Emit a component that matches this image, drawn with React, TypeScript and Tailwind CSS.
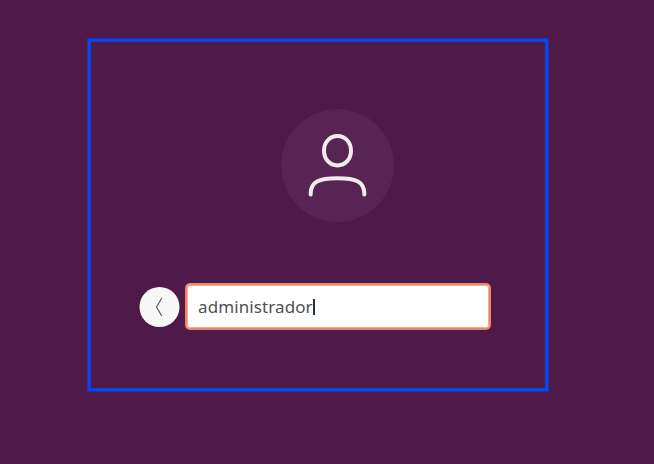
export default function App() {
  return (
    <div className="h-[464px] w-[654px] overflow-hidden bg-[#4f194a] pl-[87px] pt-[38px]">
      <div className="h-[354px] w-[462px] border border-[#2a2fa0]">
        <main className="flex h-full w-full flex-col border-2 border-[#0048ff] pl-[49px] pt-[68px] shadow-[inset_0_0_0_1px_#1d3cc4]">
          <div className="ml-[142px] flex size-[113px] items-center justify-center rounded-full bg-[#582453]">
            <svg
              width="113"
              height="113"
              viewBox="0 0 113 113"
              fill="none"
              stroke="#efedeb"
              strokeWidth="4"
              strokeLinecap="round"
              aria-hidden="true"
            >
              <path d="M56.5 27C64.3 27 70 33.4 70 41.7S64.3 56.4 56.5 56.4 43 50 43 41.7 48.7 27 56.5 27Z" />
              <path d="M29.7 85.5V84C30.3 73 37 69.3 56.5 69.3S82.7 73 83.3 84V85.5" />
            </svg>
          </div>
          <form className="mt-[61px] flex items-center gap-[6px]" onSubmit={(e) => e.preventDefault()}>
            <button type="button" aria-label="Back" className="flex size-10 translate-x-[0.5px] items-center justify-center rounded-full bg-[#f7f7f7]">
              <svg width="40" height="40" viewBox="0 0 40 40" fill="none" stroke="#5c5c5c" strokeWidth="1.2" aria-hidden="true">
                <path d="M22.3 11L17 20l5.3 9" />
              </svg>
            </button>
            <div className="flex h-[47px] w-[306px] items-center rounded-[5px] border-2 border-[#eb8766] bg-white pl-[11px] text-[17px] leading-6 text-[#505050] shadow-[inset_0_0_0_1px_#f5ad92]">
              <span className="whitespace-nowrap font-['Noto_Sans',sans-serif] tracking-[0.1px]">administrador</span>
              <span className="h-4 w-[2px] bg-[#303030]" />
            </div>
          </form>
        </main>
      </div>
    </div>
  );
}
